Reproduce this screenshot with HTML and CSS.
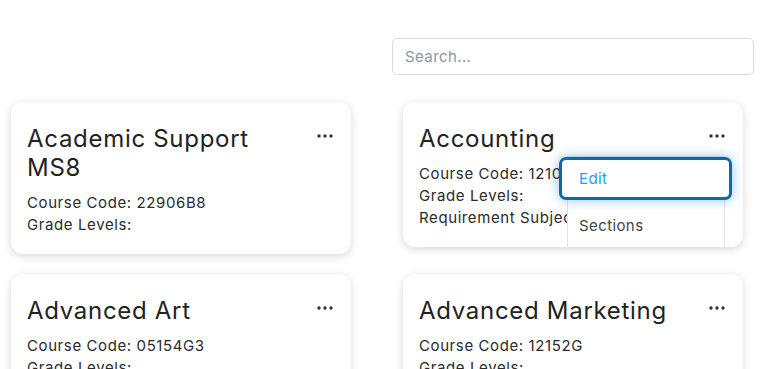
FILE: index.html
```html
<!DOCTYPE html>
<html lang="en">
<head>
    <meta charset="UTF-8">
    <meta name="viewport" content="width=device-width, initial-scale=1.0">
    <title>Courses</title>
    <link rel="stylesheet" href="styles.css">
</head>
<body>
    <div class="page">
        <div class="search-row">
            <input class="search" type="text" placeholder="Search...">
        </div>

        <div class="courses">
            <!-- Карточка 1 -->
            <div class="card">
                <div class="card-head">
                    <h2 class="title">Academic Support MS8</h2>
                    <button class="more"><svg width="16" height="4" viewBox="0 0 16 4"><circle cx="2" cy="2" r="1.7"/><circle cx="8" cy="2" r="1.7"/><circle cx="14" cy="2" r="1.7"/></svg></button>
                </div>
                <p class="line">Course Code: 22906B8</p>
                <p class="line">Grade Levels:</p>
            </div>

            <!-- Карточка 2 с открытым меню -->
            <div class="card">
                <div class="card-head">
                    <h2 class="title">Accounting</h2>
                    <button class="more"><svg width="16" height="4" viewBox="0 0 16 4"><circle cx="2" cy="2" r="1.7"/><circle cx="8" cy="2" r="1.7"/><circle cx="14" cy="2" r="1.7"/></svg></button>
                </div>
                <p class="line">Course Code: 12104G</p>
                <p class="line">Grade Levels:</p>
                <p class="line">Requirement Subject: Career Tech</p>
                <div class="menu">
                    <a class="menu-item focused" href="#">Edit</a>
                    <a class="menu-item" href="#">Sections</a>
                </div>
            </div>

            <!-- Карточка 3 -->
            <div class="card">
                <div class="card-head">
                    <h2 class="title">Advanced Art</h2>
                    <button class="more"><svg width="16" height="4" viewBox="0 0 16 4"><circle cx="2" cy="2" r="1.7"/><circle cx="8" cy="2" r="1.7"/><circle cx="14" cy="2" r="1.7"/></svg></button>
                </div>
                <p class="line">Course Code: 05154G3</p>
                <p class="line">Grade Levels:</p>
            </div>

            <!-- Карточка 4 -->
            <div class="card">
                <div class="card-head">
                    <h2 class="title">Advanced Marketing</h2>
                    <button class="more"><svg width="16" height="4" viewBox="0 0 16 4"><circle cx="2" cy="2" r="1.7"/><circle cx="8" cy="2" r="1.7"/><circle cx="14" cy="2" r="1.7"/></svg></button>
                </div>
                <p class="line">Course Code: 12152G</p>
                <p class="line">Grade Levels:</p>
            </div>
        </div>
    </div>
</body>
</html>
```

FILE: styles.css
```css
body {
    font-family: Inter, 'Noto Sans', sans-serif;
    margin: 0;
    background-color: #fff;
    color: #222;
}
.page {
    padding: 38px 11px 0;
}
.search-row {
    display: flex;
    justify-content: flex-end;
    margin-bottom: 27px;
}
.search {
    width: 362px;
    height: 37px;
    box-sizing: border-box;
    border: 1px solid #d3dde6;
    border-radius: 5px;
    padding: 0 12px;
    font-family: inherit;
    font-size: 15px;
    letter-spacing: 0.4px;
    color: #333;
}
.search::placeholder {
    color: #8d969e;
}
.courses {
    display: grid;
    grid-template-columns: 340px 340px;
    column-gap: 52px;
    row-gap: 20px;
    align-items: start;
}
.card {
    position: relative;
    overflow: hidden;
    background-color: #fff;
    border-radius: 12px;
    padding: 22px 16px 18px;
    box-shadow: 0 2px 8px rgba(0, 0, 0, 0.16);
}
.card-head {
    display: flex;
    justify-content: space-between;
    align-items: flex-start;
    margin-bottom: 10px;
}
.title {
    margin: 0;
    font-size: 24px;
    font-weight: 400;
    line-height: 29px;
    letter-spacing: 0.7px;
    color: #222;
    max-width: 260px;
}
.more {
    border: none;
    background: none;
    padding: 0;
    margin: 10px 2px 0 0;
    cursor: pointer;
    display: flex;
}
.more svg {
    fill: #333;
}
.line {
    margin: 0;
    font-size: 15px;
    line-height: 22px;
    letter-spacing: 0.6px;
    color: #2b2b2b;
    white-space: nowrap;
}
.menu {
    position: absolute;
    left: 164px;
    top: 54px;
    width: 158px;
    height: 200px;
    box-sizing: border-box;
    background-color: #fff;
    border: 1px solid #dbe3ea;
    display: flex;
    flex-direction: column;
}
.menu-item {
    display: block;
    font-size: 15px;
    line-height: 22px;
    letter-spacing: 0.4px;
    color: #444;
    text-decoration: none;
    padding: 15px 11px 10px;
}
.menu-item.focused {
    color: #1ba2ef;
    margin: 0 -8px 0 -9px;
    padding: 8px 17px 7px 17px;
    border: 3px solid #0c6aa8;
    border-radius: 7px;
    box-shadow: 0 0 12px rgba(20, 120, 200, 0.45);
    background-color: #fff;
}
```
